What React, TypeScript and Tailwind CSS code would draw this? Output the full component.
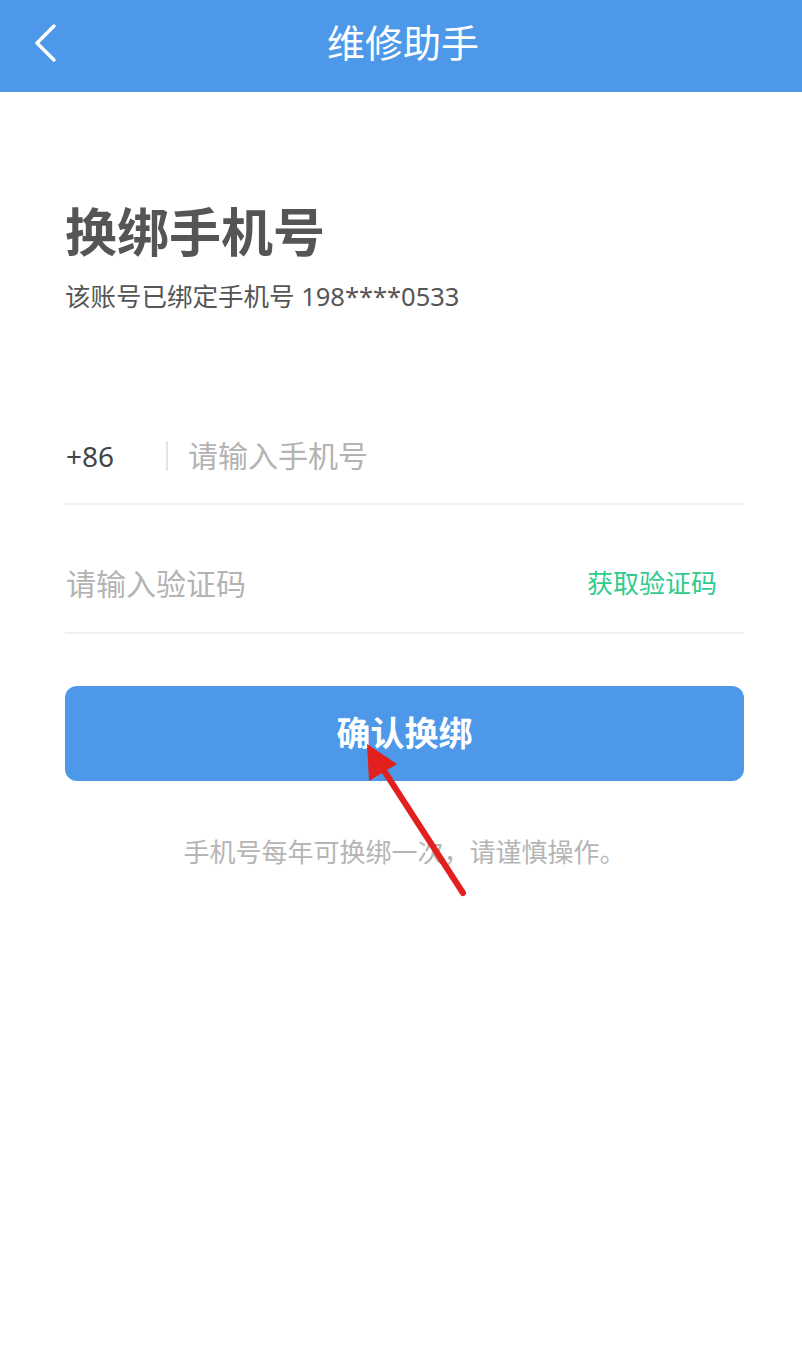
export default function App() {
  return (
    <div
      className="relative w-[802px] h-[1372px] bg-white overflow-hidden"
      style={{ fontFamily: '"Noto Sans", "Noto Sans CJK SC", sans-serif' }}
    >
      {/* Header */}
      <header className="relative h-[92px] bg-[#4d98e8] flex items-center justify-center">
        <button className="absolute left-[30px] top-[22px] w-[30px] h-[42px] flex items-center justify-center">
          <svg width="26" height="40" viewBox="0 0 26 40" fill="none">
            <path d="M22 3 L5 20 L22 37" stroke="#fff" strokeWidth="3.5" strokeLinecap="round" strokeLinejoin="round" />
          </svg>
        </button>
        <h1 className="pl-[4px] text-[38px] leading-[48px] text-white -mt-[8px]">维修助手</h1>
      </header>

      <main className="pl-[65px] pr-[58px]">
        <h2 className="mt-[109px] text-[52px] leading-[62px] font-bold text-[#555555]">换绑手机号</h2>
        <p className="mt-[16px] text-[25.5px] leading-[34px] text-[#555555]">该账号已绑定手机号 198****0533</p>

        {/* Phone row */}
        <div className="mt-[95px] h-[97px] flex items-center border-b-2 border-[#f0f0f0]">
          <span className="w-[101px] pl-[1px] text-[28px] text-[#444444]">+86</span>
          <span className="w-[2px] h-[30px] bg-[#e4e4e4]" />
          <span className="pl-[20px] text-[30px] text-[#b3b3b3]">请输入手机号</span>
        </div>

        {/* Code row */}
        <div className="mt-[30px] h-[99px] flex items-center justify-between border-b-2 border-[#f0f0f0]">
          <span className="pl-[1px] text-[30px] text-[#b3b3b3]">请输入验证码</span>
          <span className="pr-[27px] text-[26px] text-[#2ecc8f]">获取验证码</span>
        </div>

        <button className="mt-[52px] w-full h-[95px] rounded-[12px] bg-[#4d98e8] text-white text-[34px] font-bold flex items-center justify-center">
          确认换绑
        </button>

        <p className="mt-[54px] text-center text-[26px] leading-[34px] text-[#b5b5b5]">
          手机号每年可换绑一次，请谨慎操作。
        </p>
      </main>

      {/* Red annotation arrow */}
      <svg className="absolute left-0 top-0 pointer-events-none" width="802" height="1372">
        <line x1="463" y1="893" x2="381" y2="766" stroke="#e2211f" strokeWidth="6" strokeLinecap="round" />
        <polygon points="367,744 397,764 369,781" fill="#e2211f" />
      </svg>
    </div>
  );
}
